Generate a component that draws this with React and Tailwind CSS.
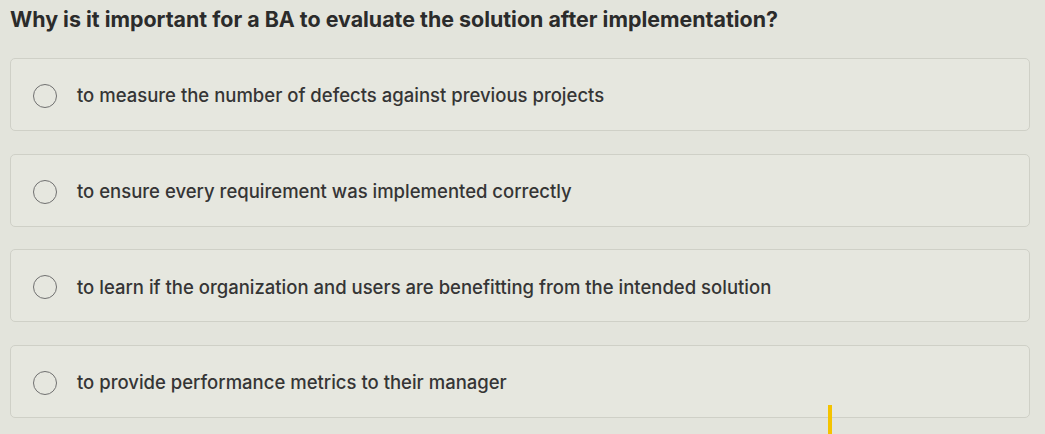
import React from "react";

const options = [
  "to measure the number of defects against previous projects",
  "to ensure every requirement was implemented correctly",
  "to learn if the organization and users are benefitting from the intended solution",
  "to provide performance metrics to their manager",
];

export default function App() {
  return (
    <div
      className="relative w-[1045px] h-[434px] overflow-hidden bg-[#e3e4dc] text-[#2e2e2e]"
      style={{ fontFamily: 'Inter, "Liberation Sans", Arial, sans-serif' }}
    >
      <div className="pl-[10px] pt-[6px] text-[21.4px] font-bold leading-[26px] text-[#2b2b2b]">
        Why is it important for a BA to evaluate the solution after implementation?
      </div>
      <div className="mt-[26px] flex flex-col gap-[22.7px] pl-[10px] pr-[15px]">
        {options.map((o) => (
          <div
            key={o}
            className="flex h-[73px] items-center gap-[20px] rounded-[5px] border border-[#cfd0c7] bg-[#e6e7df] pl-[22px] pt-[3px]"
          >
            <span className="h-[24px] w-[24px] shrink-0 rounded-full border-[1.5px] border-[#707070]" />
            <span className="text-[18.5px] font-medium text-[#353535]">{o}</span>
          </div>
        ))}
      </div>
      <div className="absolute left-[828px] top-[405px] h-[29px] w-[4px] bg-[#f4c300]" />
    </div>
  );
}
